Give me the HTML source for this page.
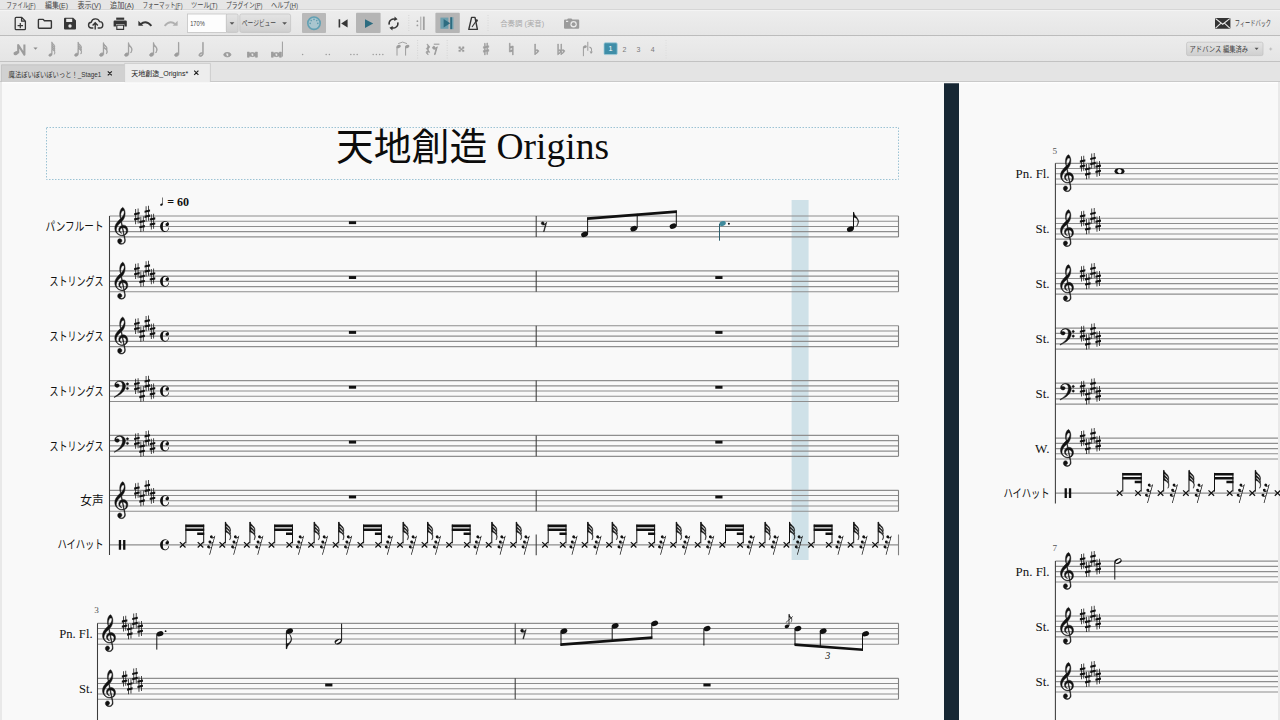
<!DOCTYPE html>
<html lang="ja"><head><meta charset="utf-8"><title>MuseScore</title>
<style>
html,body{margin:0;padding:0;}
body{width:1280px;height:720px;overflow:hidden;position:relative;background:#e7e7e7;font-family:"Liberation Sans","Noto Sans CJK JP",sans-serif;}
#menubar{position:absolute;left:0;top:0;width:1280px;height:10.4px;background:#e6e6e6;border-bottom:1px solid #d6d6d6;box-sizing:border-box;}
#tb1{position:absolute;left:0;top:10.4px;width:1280px;height:25.5px;background:linear-gradient(#ededed,#e6e6e6);border-top:1px solid #f4f4f4;border-bottom:1px solid #bcbcbc;box-sizing:border-box;}
#tb2{position:absolute;left:0;top:35.9px;width:1280px;height:26.1px;background:linear-gradient(#ececec,#e5e5e5);border-bottom:1px solid #c2c2c2;box-sizing:border-box;}
#tabs{position:absolute;left:0;top:62px;width:1280px;height:20px;background:#e4e4e4;border-bottom:1px solid #c9c9c9;box-sizing:border-box;}
#canvas{position:absolute;left:0;top:82px;width:1280px;height:638px;background:#e9e9e9;}
#pageL{position:absolute;left:2px;top:0;width:941.7px;height:638px;background:#f9f9f9;}
#gap{position:absolute;left:943.7px;top:1px;width:15px;height:637px;background:#172734;}
#pageR{position:absolute;left:958.7px;top:0;width:319.5px;height:638px;background:#f9f9f9;}
#topglow{position:absolute;left:2px;top:0;width:1276px;height:2.4px;background:linear-gradient(#ffffff,rgba(255,255,255,0));}
#title{position:absolute;left:46px;top:127px;width:853px;height:53px;margin:0;text-align:center;font-family:"Liberation Serif","Noto Sans CJK JP",serif;font-size:37.2px;line-height:41px;font-weight:normal;color:#0c0c0c;white-space:nowrap;letter-spacing:0;}
#title .kj{font-size:37.8px;}#title .lt{font-size:37.5px;position:relative;top:-1px;}
#score,#ui{position:absolute;left:0;top:0;}
#ui text{font-family:"Liberation Sans","Noto Sans CJK JP",sans-serif;}
</style></head>
<body>
<div id="menubar"></div><div id="tb1"></div><div id="tb2"></div><div id="tabs"></div>
<div id="canvas"><div id="pageL"></div><div id="gap"></div><div id="pageR"></div><div id="topglow"></div></div>
<h1 id="title"><span class="kj">天地創造</span> <span class="lt">Origins</span></h1>
<svg id="score" width="1280" height="720" viewBox="0 0 1280 720">
<defs><path id="gc" d="M314 -801Q300 -854 291 -906Q282 -958 282 -1012Q282 -1059 288.5 -1100.5Q295 -1142 307 -1177Q320 -1217 341 -1252.5Q362 -1288 385.5 -1311Q409 -1334 427 -1334Q451 -1334 493 -1249Q514 -1206 524 -1156Q534 -1106 534 -1049Q534 -978 515 -907.5Q496 -837 459.5 -775Q423 -713 372 -666L407 -498Q422 -500 432 -501Q442 -502 447 -502Q508 -502 556 -467.5Q604 -433 632.5 -377Q661 -321 661 -254Q661 -177 621.5 -115.5Q582 -54 503 -25Q508 -8 532 117Q538 147 541 164.5Q544 182 545 195Q546 208 546 225Q546 275 521.5 314.5Q497 354 455.5 376Q414 398 363 398Q311 398 271 378.5Q231 359 208 324.5Q185 290 185 245Q185 197 211.5 165Q238 133 287 133Q329 133 355.5 163.5Q382 194 382 236Q382 272 357 299Q332 326 292 326H282Q308 365 364 365Q433 365 472 320Q511 275 511 205Q511 188 507 159.5Q503 131 493 91Q483 51 477.5 25Q472 -1 470 -12Q436 -2 390 -2Q304 -2 222 -52Q142 -102 96 -184Q50 -266 50 -361Q50 -451 91 -530Q132 -609 192.5 -675Q253 -741 314 -801ZM341 -826Q364 -838 390 -870.5Q416 -903 440 -945Q464 -987 479 -1029.5Q494 -1072 494 -1106Q494 -1142 483 -1163Q472 -1184 445 -1184Q421 -1184 398.5 -1162Q376 -1140 358.5 -1103.5Q341 -1067 331 -1022Q321 -977 321 -930Q321 -898 327.5 -872Q334 -846 341 -826ZM398 -379Q371 -373 347 -353.5Q323 -334 308.5 -306.5Q294 -279 294 -248Q294 -223 307 -196.5Q320 -170 339 -154Q352 -142 365 -136Q380 -129 380 -123Q380 -120 370 -117Q332 -126 301.5 -151Q271 -176 253.5 -211.5Q236 -247 236 -287Q236 -330 253.5 -370Q271 -410 302.5 -442Q334 -474 374 -490L345 -641Q229 -547 174.5 -456.5Q120 -366 120 -277Q120 -212 154 -156Q188 -100 247 -65.5Q306 -31 380 -31Q400 -31 420.5 -35Q441 -39 464 -45ZM495 -55Q593 -97 593 -227Q593 -270 571 -305.5Q549 -341 512 -362Q475 -383 429 -383Z" stroke="#111" stroke-width="22"/><path id="fc" d="M50 -123Q216 -231 288 -301Q336 -348 373 -408.5Q410 -469 431.5 -536Q453 -603 453 -669Q453 -728 435 -773.5Q417 -819 383 -845Q349 -871 302 -871Q284 -871 264.5 -867Q245 -863 224 -855Q181 -839 158 -813.5Q135 -788 135 -765Q135 -756 143 -752Q151 -748 158 -748Q168 -748 183 -752Q190 -754 196.5 -755Q203 -756 210 -756Q248 -756 272 -733.5Q296 -711 296 -674Q296 -638 266 -612Q236 -586 195 -586Q146 -586 111 -617Q76 -648 76 -697Q76 -756 109 -802Q142 -848 198.5 -874Q255 -900 324 -900Q400 -900 460 -867Q520 -834 555.5 -776.5Q591 -719 591 -646Q591 -551 538 -464Q511 -419 476.5 -379Q442 -339 389 -297.5Q336 -256 256 -208Q176 -160 57 -101ZM687 -809Q710 -809 726 -793Q742 -777 742 -754Q742 -731 726 -715.5Q710 -700 687 -700Q664 -700 648 -715.5Q632 -731 632 -754Q632 -777 648 -793Q664 -809 687 -809ZM687 -589Q710 -589 726 -573Q742 -557 742 -534Q742 -511 726 -495.5Q710 -480 687 -480Q664 -480 648 -495.5Q632 -511 632 -534Q632 -557 648 -573Q664 -589 687 -589Z" stroke="#111" stroke-width="22"/><path id="sh" d="M97 -46V-189L50 -177V-277L97 -290V-486H128V-298L195 -314V-509H226V-322L275 -333V-234L226 -220V-77L275 -89V14L226 26V214H195V34L128 52V247H97V59L50 71V-32ZM195 -70V-214L128 -197V-54Z"/><path id="ct" d="M282 -754Q329 -754 371.5 -734.5Q414 -715 441 -681.5Q468 -648 468 -606Q468 -569 443 -542.5Q418 -516 380 -516Q346 -516 324 -535.5Q302 -555 302 -589Q302 -615 317 -633Q332 -651 353 -661Q364 -666 380 -669.5Q396 -673 396 -679Q396 -695 368 -709Q340 -723 308 -723Q267 -723 238 -704Q209 -685 194.5 -639Q180 -593 180 -511V-433Q180 -396 191.5 -360.5Q203 -325 230 -302Q257 -279 301 -279Q351 -279 392 -324Q433 -369 445 -445H472Q468 -387 442 -341.5Q416 -296 372 -270Q328 -244 271 -244Q208 -244 158 -280.5Q108 -317 79 -378Q50 -439 50 -514Q50 -562 68.5 -605Q87 -648 119 -681.5Q151 -715 193 -734.5Q235 -754 282 -754Z"/><path id="r8" d="M155 -269 251 -609Q230 -590 203.5 -582Q177 -574 151 -574Q108 -574 79 -597Q50 -620 50 -663Q50 -691 70 -710.5Q90 -730 121 -730Q150 -730 168.5 -711.5Q187 -693 187 -662Q187 -640 177 -623Q177 -617 189 -617Q244 -617 294 -703H312L191 -269Z" stroke="#111" stroke-width="22"/><path id="r32" d="M155 4 251 -336Q230 -317 203.5 -309Q177 -301 151 -301Q108 -301 79 -324Q50 -347 50 -390Q50 -417 70 -437Q90 -457 121 -457Q150 -457 168.5 -438.5Q187 -420 187 -389Q187 -367 177 -350Q177 -344 189 -344Q230 -344 267 -390L319 -580Q298 -561 271.5 -553Q245 -545 219 -545Q176 -545 147 -568Q118 -591 118 -634Q118 -663 138 -682Q158 -701 189 -701Q219 -701 237 -682Q255 -663 255 -633Q255 -623 252 -612.5Q249 -602 245 -594Q245 -588 257 -588Q298 -588 334 -633L390 -834Q369 -815 342.5 -807Q316 -799 290 -799Q247 -799 218 -822Q189 -845 189 -888Q189 -917 209 -936Q229 -955 260 -955Q290 -955 308 -936Q326 -917 326 -887Q326 -877 323 -866.5Q320 -856 316 -848Q316 -842 328 -842Q382 -842 433 -928H451L191 4Z"/><path id="f8" d="M0 -1009H26Q33 -968 41.5 -936.5Q50 -905 66.5 -875.5Q83 -846 112 -812L152 -765Q178 -736 202 -704Q274 -611 274 -511Q274 -407 186 -259H170Q199 -318 221 -377.5Q243 -437 243 -491Q243 -518 235 -546.5Q227 -575 212 -605Q181 -666 125 -704.5Q69 -743 0 -743Z" stroke="#111" stroke-width="22"/><path id="f32" d="M0 -1154H26Q29 -1117 42.5 -1089Q56 -1061 84.5 -1031Q113 -1001 160 -956Q207 -912 231.5 -872Q256 -832 265 -794Q274 -756 274 -716Q274 -694 271.5 -672Q269 -650 262 -628Q269 -609 271.5 -589Q274 -569 274 -548Q274 -512 264 -472Q288 -441 288 -374Q288 -328 275.5 -279.5Q263 -231 237 -193H221Q266 -286 266 -355Q266 -372 263.5 -388Q261 -404 255 -418Q235 -468 194 -506.5Q153 -545 103 -574Q66 -596 44.5 -605.5Q23 -615 0 -624ZM30 -972Q30 -935 47 -903Q59 -881 82.5 -857Q106 -833 135 -806Q167 -778 197 -743Q227 -708 247 -665Q250 -683 250 -699Q250 -762 217 -813Q199 -841 176 -863.5Q153 -886 126 -906Q104 -923 79.5 -940Q55 -957 30 -972ZM28 -798Q31 -750 55 -712.5Q79 -675 115 -641L191 -570Q212 -551 226 -534Q240 -517 247 -503Q248 -506 248 -527Q248 -678 28 -798Z" stroke="#111" stroke-width="22"/><g id="xh"><path d="M-2.8 -2.7L2.8 2.7M-2.8 2.7L2.8 -2.7" stroke="#111" stroke-width="1.25" fill="none"/></g><g id="x32"><use href="#xh"/><path d="M3.1 -1.5V-22.8" stroke="#111" stroke-width="1"/><use href="#f32" transform="translate(3.1,-1.34) scale(0.0186,0.0186)"/></g><g id="z32"><use href="#r32" transform="translate(-5.07,9.62) scale(0.02023)"/></g></defs>
<rect x="791.6" y="200" width="17" height="360" fill="#cfe1e8"/>
<rect x="46.5" y="127.5" width="852" height="52" fill="none" stroke="#9cc3d4" stroke-width="1" stroke-dasharray="1.5 1.5"/>
<path d="M109.5 216.00H898.5M109.5 221.23H898.5M109.5 226.46H898.5M109.5 231.69H898.5M109.5 236.92H898.5M109.5 270.86H898.5M109.5 276.09H898.5M109.5 281.32H898.5M109.5 286.55H898.5M109.5 291.78H898.5M109.5 325.72H898.5M109.5 330.95H898.5M109.5 336.18H898.5M109.5 341.41H898.5M109.5 346.64H898.5M109.5 380.58H898.5M109.5 385.81H898.5M109.5 391.04H898.5M109.5 396.27H898.5M109.5 401.50H898.5M109.5 435.44H898.5M109.5 440.67H898.5M109.5 445.90H898.5M109.5 451.13H898.5M109.5 456.36H898.5M109.5 490.30H898.5M109.5 495.53H898.5M109.5 500.76H898.5M109.5 505.99H898.5M109.5 511.22H898.5M109.5 544.8H898.5M97.5 623.30H898.5M97.5 628.53H898.5M97.5 633.76H898.5M97.5 638.99H898.5M97.5 644.22H898.5M97.5 678.30H898.5M97.5 683.53H898.5M97.5 688.76H898.5M97.5 693.99H898.5M97.5 699.22H898.5M1055.4 163.30H1278.0M1055.4 168.53H1278.0M1055.4 173.76H1278.0M1055.4 178.99H1278.0M1055.4 184.22H1278.0M1055.4 218.26H1278.0M1055.4 223.49H1278.0M1055.4 228.72H1278.0M1055.4 233.95H1278.0M1055.4 239.18H1278.0M1055.4 273.22H1278.0M1055.4 278.45H1278.0M1055.4 283.68H1278.0M1055.4 288.91H1278.0M1055.4 294.14H1278.0M1055.4 328.18H1278.0M1055.4 333.41H1278.0M1055.4 338.64H1278.0M1055.4 343.87H1278.0M1055.4 349.10H1278.0M1055.4 383.14H1278.0M1055.4 388.37H1278.0M1055.4 393.60H1278.0M1055.4 398.83H1278.0M1055.4 404.06H1278.0M1055.4 438.10H1278.0M1055.4 443.33H1278.0M1055.4 448.56H1278.0M1055.4 453.79H1278.0M1055.4 459.02H1278.0M1055.4 493.1H1278M1055.4 561.10H1278.0M1055.4 566.33H1278.0M1055.4 571.56H1278.0M1055.4 576.79H1278.0M1055.4 582.02H1278.0M1055.4 616.00H1278.0M1055.4 621.23H1278.0M1055.4 626.46H1278.0M1055.4 631.69H1278.0M1055.4 636.92H1278.0M1055.4 671.10H1278.0M1055.4 676.33H1278.0M1055.4 681.56H1278.0M1055.4 686.79H1278.0M1055.4 692.02H1278.0" stroke="#8e8e8e" stroke-width="1.15" fill="none"/>
<path d="M109.50 216.00V555.10M536.20 216.00V236.92M536.20 270.86V291.78M536.20 325.72V346.64M536.20 380.58V401.50M536.20 435.44V456.36M536.20 490.30V511.22M536.20 534.40V555.20M97.50 623.30V721.00M515.20 623.30V644.22M515.20 678.30V699.22M1055.40 163.30V503.40M1055.40 561.10V721.00" stroke="#3c3c3c" stroke-width="1.05" fill="none"/>
<path d="M898.50 216.00V236.92M898.50 270.86V291.78M898.50 325.72V346.64M898.50 380.58V401.50M898.50 435.44V456.36M898.50 490.30V511.22M898.50 534.40V555.20M898.50 623.30V644.22M898.50 678.30V699.22" stroke="#808080" stroke-width="1.1" fill="none"/>
<g fill="#111"><use href="#gc" transform="translate(113.73,235.82) scale(0.02130,0.02130)"/><use href="#sh" transform="translate(132.92,219.02) scale(0.02450,0.02080)"/><use href="#sh" transform="translate(138.12,226.87) scale(0.02450,0.02080)"/><use href="#sh" transform="translate(143.32,216.41) scale(0.02450,0.02080)"/><use href="#sh" transform="translate(148.52,224.25) scale(0.02450,0.02080)"/><use href="#ct" transform="translate(159.01,237.14) scale(0.02140,0.02140)"/><use href="#gc" transform="translate(113.73,290.68) scale(0.02130,0.02130)"/><use href="#sh" transform="translate(132.92,273.88) scale(0.02450,0.02080)"/><use href="#sh" transform="translate(138.12,281.73) scale(0.02450,0.02080)"/><use href="#sh" transform="translate(143.32,271.27) scale(0.02450,0.02080)"/><use href="#sh" transform="translate(148.52,279.11) scale(0.02450,0.02080)"/><use href="#ct" transform="translate(159.01,292.00) scale(0.02140,0.02140)"/><use href="#gc" transform="translate(113.73,345.54) scale(0.02130,0.02130)"/><use href="#sh" transform="translate(132.92,328.74) scale(0.02450,0.02080)"/><use href="#sh" transform="translate(138.12,336.59) scale(0.02450,0.02080)"/><use href="#sh" transform="translate(143.32,326.13) scale(0.02450,0.02080)"/><use href="#sh" transform="translate(148.52,333.97) scale(0.02450,0.02080)"/><use href="#ct" transform="translate(159.01,346.86) scale(0.02140,0.02140)"/><use href="#fc" transform="translate(113.16,399.58) scale(0.02078,0.02078)"/><use href="#sh" transform="translate(132.92,388.83) scale(0.02450,0.02080)"/><use href="#sh" transform="translate(138.12,396.68) scale(0.02450,0.02080)"/><use href="#sh" transform="translate(143.32,386.22) scale(0.02450,0.02080)"/><use href="#sh" transform="translate(148.52,394.06) scale(0.02450,0.02080)"/><use href="#ct" transform="translate(159.01,401.72) scale(0.02140,0.02140)"/><use href="#fc" transform="translate(113.16,454.44) scale(0.02078,0.02078)"/><use href="#sh" transform="translate(132.92,443.69) scale(0.02450,0.02080)"/><use href="#sh" transform="translate(138.12,451.54) scale(0.02450,0.02080)"/><use href="#sh" transform="translate(143.32,441.08) scale(0.02450,0.02080)"/><use href="#sh" transform="translate(148.52,448.92) scale(0.02450,0.02080)"/><use href="#ct" transform="translate(159.01,456.58) scale(0.02140,0.02140)"/><use href="#gc" transform="translate(113.73,510.12) scale(0.02130,0.02130)"/><use href="#sh" transform="translate(132.92,493.32) scale(0.02450,0.02080)"/><use href="#sh" transform="translate(138.12,501.17) scale(0.02450,0.02080)"/><use href="#sh" transform="translate(143.32,490.71) scale(0.02450,0.02080)"/><use href="#sh" transform="translate(148.52,498.55) scale(0.02450,0.02080)"/><use href="#ct" transform="translate(159.01,511.44) scale(0.02140,0.02140)"/><path d="M118.80 539.90h2.3v9.8h-2.3zM123.10 539.90h2.3v9.8h-2.3z" fill="#111"/><use href="#ct" transform="translate(159.01,555.48) scale(0.02140,0.02140)"/><rect x="348.90" y="276.09" width="7.2" height="2.9" fill="#111"/><rect x="715.30" y="276.09" width="7.2" height="2.9" fill="#111"/><rect x="348.90" y="330.95" width="7.2" height="2.9" fill="#111"/><rect x="715.30" y="330.95" width="7.2" height="2.9" fill="#111"/><rect x="348.90" y="385.81" width="7.2" height="2.9" fill="#111"/><rect x="715.30" y="385.81" width="7.2" height="2.9" fill="#111"/><rect x="348.90" y="440.67" width="7.2" height="2.9" fill="#111"/><rect x="715.30" y="440.67" width="7.2" height="2.9" fill="#111"/><rect x="348.90" y="495.53" width="7.2" height="2.9" fill="#111"/><rect x="715.30" y="495.53" width="7.2" height="2.9" fill="#111"/><rect x="348.90" y="221.23" width="7.2" height="2.9" fill="#111"/><path transform="translate(159.42,206.01) scale(0.01530)" d="M194 -563H231V-148Q231 -88 195.5 -51Q160 -14 107 -14Q79 -14 65 -27.5Q51 -41 51 -63Q51 -89 65 -110Q79 -131 102 -144Q125 -157 150 -157Q172 -157 194 -148Z" fill="#111"/><text x="167.2" y="206" font-family="&quot;Liberation Serif&quot;,&quot;Noto Serif CJK SC&quot;,serif" font-size="12" text-anchor="start" font-weight="bold" font-style="normal" fill="#111">= 60</text><use href="#r8" transform="translate(540.14,237.27) scale(0.02126,0.02126)"/><path d="M587.60 234.00V217.60" stroke="#111" stroke-width="1"/><path d="M637.20 228.20V213.80" stroke="#111" stroke-width="1"/><path d="M676.30 225.80V210.60" stroke="#111" stroke-width="1"/><path d="M587.10 217.30L676.80 210.30V213.00L587.10 220.00Z" fill="#111"/><ellipse cx="584.60" cy="234.40" rx="3.55" ry="2.55" transform="rotate(-22 584.60 234.40)" fill="#111"/><ellipse cx="633.80" cy="228.70" rx="3.55" ry="2.55" transform="rotate(-22 633.80 228.70)" fill="#111"/><ellipse cx="673.10" cy="226.20" rx="3.55" ry="2.55" transform="rotate(-22 673.10 226.20)" fill="#111"/><ellipse cx="722.60" cy="223.60" rx="3.3" ry="2.4" transform="rotate(-22 722.60 223.60)" fill="#3f8a9c"/><path d="M719.50 224.00V240.70" stroke="#2b5f6e" stroke-width="1"/><circle cx="728.90" cy="223.80" r="1.0" fill="#111"/><ellipse cx="850.40" cy="229.20" rx="3.55" ry="2.55" transform="rotate(-22 850.40 229.20)" fill="#111"/><path d="M853.50 228.50V212.30" stroke="#111" stroke-width="1"/><use href="#f8" transform="translate(853.50,230.97) scale(0.01850,0.01850)"/><use href="#xh" x="182.70" y="544.80"/><use href="#xh" x="200.50" y="544.80"/><path d="M185.90 543.30V524.60M203.70 543.30V524.60" stroke="#111" stroke-width="1"/><path d="M185.40 524.60H204.20v2.6H185.40zM185.40 528.60H204.20v2.5H185.40zM197.20 532.40H204.20v2.5H197.20z" fill="#111"/><use href="#z32" x="211.20" y="545.00"/><use href="#x32" x="222.30" y="544.80"/><use href="#z32" x="235.20" y="545.00"/><use href="#x32" x="246.80" y="544.80"/><use href="#z32" x="259.30" y="545.00"/><use href="#xh" x="271.50" y="544.80"/><use href="#xh" x="289.30" y="544.80"/><path d="M274.70 543.30V524.60M292.50 543.30V524.60" stroke="#111" stroke-width="1"/><path d="M274.20 524.60H293.00v2.6H274.20zM274.20 528.60H293.00v2.5H274.20zM286.00 532.40H293.00v2.5H286.00z" fill="#111"/><use href="#z32" x="300.00" y="545.00"/><use href="#x32" x="311.10" y="544.80"/><use href="#z32" x="324.00" y="545.00"/><use href="#x32" x="335.60" y="544.80"/><use href="#z32" x="348.10" y="545.00"/><use href="#xh" x="360.40" y="544.80"/><use href="#xh" x="378.20" y="544.80"/><path d="M363.60 543.30V524.60M381.40 543.30V524.60" stroke="#111" stroke-width="1"/><path d="M363.10 524.60H381.90v2.6H363.10zM363.10 528.60H381.90v2.5H363.10zM374.90 532.40H381.90v2.5H374.90z" fill="#111"/><use href="#z32" x="388.90" y="545.00"/><use href="#x32" x="400.00" y="544.80"/><use href="#z32" x="412.90" y="545.00"/><use href="#x32" x="424.50" y="544.80"/><use href="#z32" x="437.00" y="545.00"/><use href="#xh" x="449.10" y="544.80"/><use href="#xh" x="466.90" y="544.80"/><path d="M452.30 543.30V524.60M470.10 543.30V524.60" stroke="#111" stroke-width="1"/><path d="M451.80 524.60H470.60v2.6H451.80zM451.80 528.60H470.60v2.5H451.80zM463.60 532.40H470.60v2.5H463.60z" fill="#111"/><use href="#z32" x="477.60" y="545.00"/><use href="#x32" x="488.70" y="544.80"/><use href="#z32" x="501.60" y="545.00"/><use href="#x32" x="513.20" y="544.80"/><use href="#z32" x="525.70" y="545.00"/><use href="#xh" x="545.00" y="544.80"/><use href="#xh" x="562.80" y="544.80"/><path d="M548.20 543.30V524.60M566.00 543.30V524.60" stroke="#111" stroke-width="1"/><path d="M547.70 524.60H566.50v2.6H547.70zM547.70 528.60H566.50v2.5H547.70zM559.50 532.40H566.50v2.5H559.50z" fill="#111"/><use href="#z32" x="573.50" y="545.00"/><use href="#x32" x="584.60" y="544.80"/><use href="#z32" x="597.50" y="545.00"/><use href="#x32" x="609.10" y="544.80"/><use href="#z32" x="621.60" y="545.00"/><use href="#xh" x="633.60" y="544.80"/><use href="#xh" x="651.40" y="544.80"/><path d="M636.80 543.30V524.60M654.60 543.30V524.60" stroke="#111" stroke-width="1"/><path d="M636.30 524.60H655.10v2.6H636.30zM636.30 528.60H655.10v2.5H636.30zM648.10 532.40H655.10v2.5H648.10z" fill="#111"/><use href="#z32" x="662.10" y="545.00"/><use href="#x32" x="673.20" y="544.80"/><use href="#z32" x="686.10" y="545.00"/><use href="#x32" x="697.70" y="544.80"/><use href="#z32" x="710.20" y="545.00"/><use href="#xh" x="722.30" y="544.80"/><use href="#xh" x="740.10" y="544.80"/><path d="M725.50 543.30V524.60M743.30 543.30V524.60" stroke="#111" stroke-width="1"/><path d="M725.00 524.60H743.80v2.6H725.00zM725.00 528.60H743.80v2.5H725.00zM736.80 532.40H743.80v2.5H736.80z" fill="#111"/><use href="#z32" x="750.80" y="545.00"/><use href="#x32" x="761.90" y="544.80"/><use href="#z32" x="774.80" y="545.00"/><use href="#x32" x="786.40" y="544.80"/><use href="#z32" x="798.90" y="545.00"/><use href="#xh" x="811.00" y="544.80"/><use href="#xh" x="828.80" y="544.80"/><path d="M814.20 543.30V524.60M832.00 543.30V524.60" stroke="#111" stroke-width="1"/><path d="M813.70 524.60H832.50v2.6H813.70zM813.70 528.60H832.50v2.5H813.70zM825.50 532.40H832.50v2.5H825.50z" fill="#111"/><use href="#z32" x="839.50" y="545.00"/><use href="#x32" x="850.60" y="544.80"/><use href="#z32" x="863.50" y="545.00"/><use href="#x32" x="875.10" y="544.80"/><use href="#z32" x="887.60" y="545.00"/><use href="#gc" transform="translate(101.43,643.12) scale(0.02130,0.02130)"/><use href="#sh" transform="translate(120.62,626.32) scale(0.02450,0.02080)"/><use href="#sh" transform="translate(125.82,634.17) scale(0.02450,0.02080)"/><use href="#sh" transform="translate(131.02,623.71) scale(0.02450,0.02080)"/><use href="#sh" transform="translate(136.22,631.55) scale(0.02450,0.02080)"/><use href="#gc" transform="translate(101.43,698.12) scale(0.02130,0.02130)"/><use href="#sh" transform="translate(120.62,681.32) scale(0.02450,0.02080)"/><use href="#sh" transform="translate(125.82,689.17) scale(0.02450,0.02080)"/><use href="#sh" transform="translate(131.02,678.71) scale(0.02450,0.02080)"/><use href="#sh" transform="translate(136.22,686.55) scale(0.02450,0.02080)"/><ellipse cx="160.00" cy="633.76" rx="3.55" ry="2.55" transform="rotate(-22 160.00 633.76)" fill="#111"/><path d="M156.80 634.26V649.60" stroke="#111" stroke-width="1"/><circle cx="165.60" cy="631.14" r="0.9" fill="#111"/><ellipse cx="289.60" cy="631.14" rx="3.55" ry="2.55" transform="rotate(-22 289.60 631.14)" fill="#111"/><path d="M286.40 631.64V648.80" stroke="#111" stroke-width="1"/><use href="#f8" transform="translate(286.40,629.43) scale(0.01920,-0.01920)"/><ellipse cx="338.20" cy="641.60" rx="3.7" ry="2.5" transform="rotate(-22 338.20 641.60)" fill="#111"/><ellipse cx="338.20" cy="641.60" rx="3.0" ry="1.15" transform="rotate(-33 338.20 641.60)" fill="#f9f9f9"/><path d="M341.60 641.10V623.60" stroke="#111" stroke-width="1"/><rect x="325.20" y="683.53" width="7.2" height="2.9" fill="#111"/><rect x="703.40" y="683.53" width="7.2" height="2.9" fill="#111"/><use href="#r8" transform="translate(519.54,644.57) scale(0.02126,0.02126)"/><path d="M561.00 631.80V645.80" stroke="#111" stroke-width="1"/><path d="M612.20 626.60V641.60" stroke="#111" stroke-width="1"/><path d="M651.80 623.70V638.80" stroke="#111" stroke-width="1"/><path d="M560.50 643.20L652.30 636.20V638.90L560.50 645.90Z" fill="#111"/><ellipse cx="563.90" cy="631.14" rx="3.55" ry="2.55" transform="rotate(-22 563.90 631.14)" fill="#111"/><ellipse cx="615.20" cy="625.91" rx="3.55" ry="2.55" transform="rotate(-22 615.20 625.91)" fill="#111"/><ellipse cx="654.70" cy="623.30" rx="3.55" ry="2.55" transform="rotate(-22 654.70 623.30)" fill="#111"/><ellipse cx="707.10" cy="628.53" rx="3.55" ry="2.55" transform="rotate(-22 707.10 628.53)" fill="#111"/><path d="M703.90 629.03V645.50" stroke="#111" stroke-width="1"/><ellipse cx="786.90" cy="626.30" rx="2.3" ry="1.7" transform="rotate(-22 786.90 626.30)" fill="#111"/><path d="M789.00 626.00V614.20" stroke="#111" stroke-width="0.8"/><use href="#f8" transform="translate(789.00,625.30) scale(0.01100,0.01100)"/><path d="M785.8 622.6L792.8 616.4" stroke="#111" stroke-width="0.7"/><path d="M795.00 629.20V645.00" stroke="#111" stroke-width="1"/><path d="M820.30 631.40V647.00" stroke="#111" stroke-width="1"/><path d="M862.50 634.20V650.20" stroke="#111" stroke-width="1"/><path d="M794.50 643.20L863.00 648.40V651.10L794.50 645.90Z" fill="#111"/><ellipse cx="797.90" cy="628.53" rx="3.55" ry="2.55" transform="rotate(-22 797.90 628.53)" fill="#111"/><ellipse cx="823.20" cy="631.14" rx="3.55" ry="2.55" transform="rotate(-22 823.20 631.14)" fill="#111"/><ellipse cx="865.60" cy="633.76" rx="3.55" ry="2.55" transform="rotate(-22 865.60 633.76)" fill="#111"/><use href="#gc" transform="translate(1059.43,183.12) scale(0.02130,0.02130)"/><use href="#sh" transform="translate(1078.62,166.32) scale(0.02450,0.02080)"/><use href="#sh" transform="translate(1083.82,174.17) scale(0.02450,0.02080)"/><use href="#sh" transform="translate(1089.02,163.71) scale(0.02450,0.02080)"/><use href="#sh" transform="translate(1094.22,171.55) scale(0.02450,0.02080)"/><use href="#gc" transform="translate(1059.43,238.08) scale(0.02130,0.02130)"/><use href="#sh" transform="translate(1078.62,221.28) scale(0.02450,0.02080)"/><use href="#sh" transform="translate(1083.82,229.13) scale(0.02450,0.02080)"/><use href="#sh" transform="translate(1089.02,218.67) scale(0.02450,0.02080)"/><use href="#sh" transform="translate(1094.22,226.51) scale(0.02450,0.02080)"/><use href="#gc" transform="translate(1059.43,293.04) scale(0.02130,0.02130)"/><use href="#sh" transform="translate(1078.62,276.24) scale(0.02450,0.02080)"/><use href="#sh" transform="translate(1083.82,284.09) scale(0.02450,0.02080)"/><use href="#sh" transform="translate(1089.02,273.63) scale(0.02450,0.02080)"/><use href="#sh" transform="translate(1094.22,281.47) scale(0.02450,0.02080)"/><use href="#fc" transform="translate(1058.96,347.18) scale(0.02078,0.02078)"/><use href="#sh" transform="translate(1078.62,336.43) scale(0.02450,0.02080)"/><use href="#sh" transform="translate(1083.82,344.28) scale(0.02450,0.02080)"/><use href="#sh" transform="translate(1089.02,333.82) scale(0.02450,0.02080)"/><use href="#sh" transform="translate(1094.22,341.66) scale(0.02450,0.02080)"/><use href="#fc" transform="translate(1058.96,402.14) scale(0.02078,0.02078)"/><use href="#sh" transform="translate(1078.62,391.39) scale(0.02450,0.02080)"/><use href="#sh" transform="translate(1083.82,399.24) scale(0.02450,0.02080)"/><use href="#sh" transform="translate(1089.02,388.78) scale(0.02450,0.02080)"/><use href="#sh" transform="translate(1094.22,396.62) scale(0.02450,0.02080)"/><use href="#gc" transform="translate(1059.43,457.92) scale(0.02130,0.02130)"/><use href="#sh" transform="translate(1078.62,441.12) scale(0.02450,0.02080)"/><use href="#sh" transform="translate(1083.82,448.97) scale(0.02450,0.02080)"/><use href="#sh" transform="translate(1089.02,438.51) scale(0.02450,0.02080)"/><use href="#sh" transform="translate(1094.22,446.35) scale(0.02450,0.02080)"/><path d="M1064.60 488.20h2.3v9.8h-2.3zM1068.90 488.20h2.3v9.8h-2.3z" fill="#111"/><ellipse cx="1119.5" cy="171.15" rx="5.0" ry="2.9" fill="#111"/><ellipse cx="1119.5" cy="171.15" rx="2.2" ry="2.0" transform="rotate(35 1119.5 171.15)" fill="#f9f9f9"/><use href="#xh" x="1119.60" y="493.10"/><use href="#xh" x="1138.01" y="493.10"/><path d="M1122.80 491.60V472.90M1141.21 491.60V472.90" stroke="#111" stroke-width="1"/><path d="M1122.30 472.90H1141.71v2.6H1122.30zM1122.30 476.90H1141.71v2.5H1122.30zM1134.71 480.70H1141.71v2.5H1134.71z" fill="#111"/><use href="#z32" x="1149.07" y="493.30"/><use href="#x32" x="1160.55" y="493.10"/><use href="#z32" x="1173.88" y="493.30"/><use href="#x32" x="1185.88" y="493.10"/><use href="#z32" x="1198.80" y="493.30"/><use href="#xh" x="1211.30" y="493.10"/><use href="#xh" x="1229.71" y="493.10"/><path d="M1214.50 491.60V472.90M1232.91 491.60V472.90" stroke="#111" stroke-width="1"/><path d="M1214.00 472.90H1233.41v2.6H1214.00zM1214.00 476.90H1233.41v2.5H1214.00zM1226.41 480.70H1233.41v2.5H1226.41z" fill="#111"/><use href="#z32" x="1240.77" y="493.30"/><use href="#x32" x="1252.25" y="493.10"/><use href="#z32" x="1265.59" y="493.30"/><use href="#x32" x="1277.58" y="493.10"/><use href="#z32" x="1290.50" y="493.30"/><use href="#gc" transform="translate(1059.43,580.92) scale(0.02130,0.02130)"/><use href="#sh" transform="translate(1078.62,564.12) scale(0.02450,0.02080)"/><use href="#sh" transform="translate(1083.82,571.97) scale(0.02450,0.02080)"/><use href="#sh" transform="translate(1089.02,561.51) scale(0.02450,0.02080)"/><use href="#sh" transform="translate(1094.22,569.35) scale(0.02450,0.02080)"/><use href="#gc" transform="translate(1059.43,635.82) scale(0.02130,0.02130)"/><use href="#sh" transform="translate(1078.62,619.02) scale(0.02450,0.02080)"/><use href="#sh" transform="translate(1083.82,626.87) scale(0.02450,0.02080)"/><use href="#sh" transform="translate(1089.02,616.41) scale(0.02450,0.02080)"/><use href="#sh" transform="translate(1094.22,624.25) scale(0.02450,0.02080)"/><use href="#gc" transform="translate(1059.43,690.92) scale(0.02130,0.02130)"/><use href="#sh" transform="translate(1078.62,674.12) scale(0.02450,0.02080)"/><use href="#sh" transform="translate(1083.82,681.97) scale(0.02450,0.02080)"/><use href="#sh" transform="translate(1089.02,671.51) scale(0.02450,0.02080)"/><use href="#sh" transform="translate(1094.22,679.35) scale(0.02450,0.02080)"/><ellipse cx="1118.10" cy="561.10" rx="3.7" ry="2.5" transform="rotate(-22 1118.10 561.10)" fill="#111"/><ellipse cx="1118.10" cy="561.10" rx="3.0" ry="1.15" transform="rotate(-33 1118.10 561.10)" fill="#f9f9f9"/><path d="M1114.80 561.60V579.60" stroke="#111" stroke-width="1"/></g>
<text x="103.6" y="231.16" font-family="&quot;Liberation Sans&quot;,&quot;Noto Sans CJK JP&quot;,sans-serif" font-size="12" text-anchor="end" font-weight="normal" font-style="normal" fill="#111" textLength="58.1" lengthAdjust="spacingAndGlyphs">パンフルート</text><text x="103.6" y="286.02" font-family="&quot;Liberation Sans&quot;,&quot;Noto Sans CJK JP&quot;,sans-serif" font-size="12" text-anchor="end" font-weight="normal" font-style="normal" fill="#111" textLength="54.1" lengthAdjust="spacingAndGlyphs">ストリングス</text><text x="103.6" y="340.88" font-family="&quot;Liberation Sans&quot;,&quot;Noto Sans CJK JP&quot;,sans-serif" font-size="12" text-anchor="end" font-weight="normal" font-style="normal" fill="#111" textLength="54.1" lengthAdjust="spacingAndGlyphs">ストリングス</text><text x="103.6" y="395.73999999999995" font-family="&quot;Liberation Sans&quot;,&quot;Noto Sans CJK JP&quot;,sans-serif" font-size="12" text-anchor="end" font-weight="normal" font-style="normal" fill="#111" textLength="54.1" lengthAdjust="spacingAndGlyphs">ストリングス</text><text x="103.6" y="450.59999999999997" font-family="&quot;Liberation Sans&quot;,&quot;Noto Sans CJK JP&quot;,sans-serif" font-size="12" text-anchor="end" font-weight="normal" font-style="normal" fill="#111" textLength="54.1" lengthAdjust="spacingAndGlyphs">ストリングス</text><text x="103.6" y="505.46" font-family="&quot;Liberation Sans&quot;,&quot;Noto Sans CJK JP&quot;,sans-serif" font-size="12" text-anchor="end" font-weight="normal" font-style="normal" fill="#111" textLength="23.4" lengthAdjust="spacingAndGlyphs">女声</text><text x="103.6" y="549.4" font-family="&quot;Liberation Sans&quot;,&quot;Noto Sans CJK JP&quot;,sans-serif" font-size="12" text-anchor="end" font-weight="normal" font-style="normal" fill="#111" textLength="46.2" lengthAdjust="spacingAndGlyphs">ハイハット</text><text x="96.6" y="613.1" font-family="&quot;Liberation Serif&quot;,&quot;Noto Serif CJK SC&quot;,serif" font-size="9.2" text-anchor="middle" font-weight="normal" font-style="normal" fill="#555">3</text><text x="92.6" y="638.2" font-family="&quot;Liberation Serif&quot;,&quot;Noto Serif CJK SC&quot;,serif" font-size="12" text-anchor="end" font-weight="normal" font-style="normal" fill="#111" textLength="33.4" lengthAdjust="spacingAndGlyphs">Pn. Fl.</text><text x="92.6" y="693.2" font-family="&quot;Liberation Serif&quot;,&quot;Noto Serif CJK SC&quot;,serif" font-size="12" text-anchor="end" font-weight="normal" font-style="normal" fill="#111" textLength="13.6" lengthAdjust="spacingAndGlyphs">St.</text><text x="827.8" y="658.6" font-family="&quot;Liberation Serif&quot;,&quot;Noto Serif CJK SC&quot;,serif" font-size="10" text-anchor="middle" font-weight="normal" font-style="italic" fill="#111">3</text><text x="1054.9" y="154.0" font-family="&quot;Liberation Serif&quot;,&quot;Noto Serif CJK SC&quot;,serif" font-size="9.2" text-anchor="middle" font-weight="normal" font-style="normal" fill="#555">5</text><text x="1049.6" y="178.16000000000003" font-family="&quot;Liberation Serif&quot;,&quot;Noto Serif CJK SC&quot;,serif" font-size="12" text-anchor="end" font-weight="normal" font-style="normal" fill="#111" textLength="34" lengthAdjust="spacingAndGlyphs">Pn. Fl.</text><text x="1049.6" y="233.12000000000003" font-family="&quot;Liberation Serif&quot;,&quot;Noto Serif CJK SC&quot;,serif" font-size="12" text-anchor="end" font-weight="normal" font-style="normal" fill="#111" textLength="14" lengthAdjust="spacingAndGlyphs">St.</text><text x="1049.6" y="288.08" font-family="&quot;Liberation Serif&quot;,&quot;Noto Serif CJK SC&quot;,serif" font-size="12" text-anchor="end" font-weight="normal" font-style="normal" fill="#111" textLength="14" lengthAdjust="spacingAndGlyphs">St.</text><text x="1049.6" y="343.03999999999996" font-family="&quot;Liberation Serif&quot;,&quot;Noto Serif CJK SC&quot;,serif" font-size="12" text-anchor="end" font-weight="normal" font-style="normal" fill="#111" textLength="14" lengthAdjust="spacingAndGlyphs">St.</text><text x="1049.6" y="397.99999999999994" font-family="&quot;Liberation Serif&quot;,&quot;Noto Serif CJK SC&quot;,serif" font-size="12" text-anchor="end" font-weight="normal" font-style="normal" fill="#111" textLength="14" lengthAdjust="spacingAndGlyphs">St.</text><text x="1049.6" y="452.96" font-family="&quot;Liberation Serif&quot;,&quot;Noto Serif CJK SC&quot;,serif" font-size="12" text-anchor="end" font-weight="normal" font-style="normal" fill="#111" textLength="14.5" lengthAdjust="spacingAndGlyphs">W.</text><text x="1049.6" y="497.70000000000005" font-family="&quot;Liberation Sans&quot;,&quot;Noto Sans CJK JP&quot;,sans-serif" font-size="12" text-anchor="end" font-weight="normal" font-style="normal" fill="#111" textLength="46.2" lengthAdjust="spacingAndGlyphs">ハイハット</text><text x="1054.9" y="551.3" font-family="&quot;Liberation Serif&quot;,&quot;Noto Serif CJK SC&quot;,serif" font-size="9.2" text-anchor="middle" font-weight="normal" font-style="normal" fill="#555">7</text><text x="1049.6" y="575.96" font-family="&quot;Liberation Serif&quot;,&quot;Noto Serif CJK SC&quot;,serif" font-size="12" text-anchor="end" font-weight="normal" font-style="normal" fill="#111" textLength="34" lengthAdjust="spacingAndGlyphs">Pn. Fl.</text><text x="1049.6" y="630.86" font-family="&quot;Liberation Serif&quot;,&quot;Noto Serif CJK SC&quot;,serif" font-size="12" text-anchor="end" font-weight="normal" font-style="normal" fill="#111" textLength="14" lengthAdjust="spacingAndGlyphs">St.</text><text x="1049.6" y="685.96" font-family="&quot;Liberation Serif&quot;,&quot;Noto Serif CJK SC&quot;,serif" font-size="12" text-anchor="end" font-weight="normal" font-style="normal" fill="#111" textLength="14" lengthAdjust="spacingAndGlyphs">St.</text>
</svg>
<svg id="ui" width="1280" height="83" viewBox="0 0 1280 83">
<defs><linearGradient id="btn" x1="0" y1="0" x2="0" y2="1"><stop offset="0" stop-color="#e4e4e4"/><stop offset="1" stop-color="#cfcfcf"/></linearGradient></defs>
<text x="6.3" y="7.9" font-size="7.5" fill="#444" text-anchor="start" font-weight="normal" textLength="29.3" lengthAdjust="spacingAndGlyphs">ファイル(F)</text><path d="M27.6 9.2h4.2" stroke="#555" stroke-width="0.6"/><text x="45" y="7.9" font-size="7.5" fill="#444" text-anchor="start" font-weight="normal" textLength="23.0" lengthAdjust="spacingAndGlyphs">編集(E)</text><path d="M60.0 9.2h4.2" stroke="#555" stroke-width="0.6"/><text x="77.5" y="7.9" font-size="7.5" fill="#444" text-anchor="start" font-weight="normal" textLength="23.5" lengthAdjust="spacingAndGlyphs">表示(V)</text><path d="M93.0 9.2h4.2" stroke="#555" stroke-width="0.6"/><text x="110" y="7.9" font-size="7.5" fill="#444" text-anchor="start" font-weight="normal" textLength="23.8" lengthAdjust="spacingAndGlyphs">追加(A)</text><path d="M125.8 9.2h4.2" stroke="#555" stroke-width="0.6"/><text x="142.5" y="7.9" font-size="7.5" fill="#444" text-anchor="start" font-weight="normal" textLength="40.0" lengthAdjust="spacingAndGlyphs">フォーマット(F)</text><path d="M174.5 9.2h4.2" stroke="#555" stroke-width="0.6"/><text x="191" y="7.9" font-size="7.5" fill="#444" text-anchor="start" font-weight="normal" textLength="26.5" lengthAdjust="spacingAndGlyphs">ツール(T)</text><path d="M209.5 9.2h4.2" stroke="#555" stroke-width="0.6"/><text x="226" y="7.9" font-size="7.5" fill="#444" text-anchor="start" font-weight="normal" textLength="36.5" lengthAdjust="spacingAndGlyphs">プラグイン(P)</text><path d="M254.5 9.2h4.2" stroke="#555" stroke-width="0.6"/><text x="271" y="7.9" font-size="7.5" fill="#444" text-anchor="start" font-weight="normal" textLength="27.0" lengthAdjust="spacingAndGlyphs">ヘルプ(H)</text><path d="M290.0 9.2h4.2" stroke="#555" stroke-width="0.6"/><path d="M16.2 17.4h5.6l3.6 3.7v7.6q0 1-1 1h-8.2q-1 0-1-1v-10.3q0-1 1-1zM21.6 17.6v3.6h3.6" fill="none" stroke="#363636" stroke-width="1.3" stroke-linejoin="round"/><path d="M17.6 25.6h5.4M20.3 22.9v5.4" stroke="#363636" stroke-width="1.2"/><path d="M39 19.4h4.2l1.2 1.4h6.4q0.6 0 0.6 0.6v6.2q0 0.6-0.6 0.6h-11.8q-0.6 0-0.6-0.6v-7.6q0-0.6 0.6-0.6z" fill="none" stroke="#363636" stroke-width="1.4" stroke-linejoin="round"/><path d="M65 17.8h8.2l2.8 2.8v8q0 1-1 1h-10q-1 0-1-1v-9.8q0-1 1-1z" fill="#363636"/><rect x="66.2" y="18.8" width="6" height="3.2" fill="#e9e9e9"/><circle cx="70" cy="26" r="1.7" fill="#e9e9e9"/><path d="M92.8 28h-1.2a2.9 2.9 0 0 1-0.3-5.8a4.3 4.3 0 0 1 8.2-0.6a3.2 3.2 0 0 1 0.2 6.4h-1.5" fill="none" stroke="#363636" stroke-width="1.4" stroke-linecap="round"/><path d="M95.2 29.6v-6.2M92.6 25.4l2.6-2.6l2.6 2.6" fill="none" stroke="#363636" stroke-width="1.4"/><path d="M116.2 17.6h8v2.2h-8z" fill="#363636"/><path d="M114.6 20.6h11.2q1 0 1 1v5h-2.4v-2.4h-8.4v2.4h-2.4v-5q0-1 1-1z" fill="#363636"/><path d="M116.8 25.2h6.8v4.2h-6.8z" fill="none" stroke="#363636" stroke-width="1.1"/><path d="M138.4 20.8v4.9h5z" fill="#363636"/><path d="M140.6 24.2q5.4-4.6 10.8 1.6" fill="none" stroke="#363636" stroke-width="1.9"/><path d="M177.6 20.8v4.9h-5z" fill="#b0b0b0"/><path d="M175.4 24.2q-5.4-4.6-10.8 1.6" fill="none" stroke="#b0b0b0" stroke-width="1.9"/><rect x="187.5" y="14" width="39" height="18.4" fill="#fdfdfd" stroke="#c4c4c4" stroke-width="0.8"/><text x="190.2" y="25.6" font-size="7.6" fill="#444" text-anchor="start" font-weight="normal" textLength="14.5" lengthAdjust="spacingAndGlyphs">170%</text><rect x="226.3" y="14" width="11.8" height="18.4" rx="1.5" fill="url(#btn)" stroke="#c2c2c2" stroke-width="0.7"/><path d="M229.6 22.2h4.8l-2.4 2.6z" fill="#555"/><rect x="239.8" y="14" width="50.8" height="18.4" rx="1.8" fill="url(#btn)" stroke="#c2c2c2" stroke-width="0.7"/><text x="241.8" y="25.8" font-size="7.6" fill="#444" text-anchor="start" font-weight="normal" textLength="34.3" lengthAdjust="spacingAndGlyphs">ページビュー</text><path d="M282.2 22.2h4.8l-2.4 2.6z" fill="#555"/><rect x="302" y="13" width="24" height="20" rx="1" fill="#b9b9b9"/><circle cx="314" cy="23.2" r="6.2" fill="#a9c6cf" stroke="#62a0b3" stroke-width="1.6"/><g fill="#5f9bae"><circle cx="310.2" cy="23.4" r="0.8"/><circle cx="311.2" cy="20.6" r="0.8"/><circle cx="314" cy="19.4" r="0.8"/><circle cx="316.8" cy="20.6" r="0.8"/><circle cx="317.8" cy="23.4" r="0.8"/></g><path d="M338.6 19.3h1.6v8.2h-1.6zM347.6 19.3v8.2l-6.4-4.1z" fill="#363636"/><rect x="356" y="12.8" width="24.6" height="20.2" rx="1" fill="#b5b5b5"/><path d="M365 19.2l8.2 4.4l-8.2 4.4z" fill="#2d6c80"/><path d="M389.2 24.6a4.6 4.6 0 0 1 6.4-5.2M397.8 22.4a4.6 4.6 0 0 1-6.4 5.2" fill="none" stroke="#363636" stroke-width="1.5"/><path d="M394.6 16.6l3 2.6l-3.4 1.8zM392.4 30.4l-3-2.6l3.4-1.8z" fill="#363636"/><path d="M408.8 15v17" stroke="#d4d4d4" stroke-width="1" stroke-dasharray="1 1.5"/><circle cx="417.4" cy="21.2" r="0.9" fill="#9a9a9a"/><circle cx="417.4" cy="25.4" r="0.9" fill="#9a9a9a"/><path d="M420.8 16.6v13.4" stroke="#a0a0a0" stroke-width="0.9"/><path d="M423.8 16.6v13.4" stroke="#a0a0a0" stroke-width="1.8"/><rect x="435.4" y="12.8" width="24.4" height="20.2" rx="1" fill="#b5b5b5"/><rect x="440.4" y="17.6" width="8" height="11.2" fill="#6d9fae"/><path d="M443.6 19l6.6 4.2l-6.6 4.2z" fill="#2d6c80"/><rect x="450.2" y="17.2" width="1.8" height="12" fill="#2d6c80"/><rect x="452" y="17.2" width="1.4" height="12" fill="#6d9fae"/><path d="M471.6 17.4h3.4l2.4 12h-8.6z" fill="none" stroke="#363636" stroke-width="1.4" stroke-linejoin="round"/><path d="M472 27l4.6-6.6" stroke="#363636" stroke-width="1.1"/><circle cx="476.6" cy="20.6" r="1.3" fill="#363636"/><path d="M488 15v17" stroke="#d8d8d8" stroke-width="1" stroke-dasharray="1 1.5"/><text x="500.2" y="26.0" font-size="7.1" fill="#a8a8a8" text-anchor="start" font-weight="normal" textLength="44" lengthAdjust="spacingAndGlyphs">合奏調 (実音)</text><path d="M565 19.6h2l1-1.2h3.4l1 1.2h5.8q1 0 1 1v7.2q0 1-1 1h-13.2q-1 0-1-1v-7.2q0-1 1-1z" fill="#9b9b9b"/><circle cx="573.6" cy="24.2" r="3.2" fill="#e9e9e9"/><circle cx="573.6" cy="24.2" r="1.9" fill="#9b9b9b"/><rect x="566" y="20.8" width="2.2" height="1.2" fill="#e9e9e9"/><rect x="1215" y="18" width="15.4" height="10.8" rx="0.8" fill="#333"/><path d="M1215.6 18.6l7.1 5.6l7.1-5.6M1215.6 28.2l5.4-5M1229.8 28.2l-5.4-5" fill="none" stroke="#e9e9e9" stroke-width="1.1"/><text x="1234.8" y="26" font-size="7.8" fill="#3a3a3a" text-anchor="start" font-weight="normal" textLength="36.2" lengthAdjust="spacingAndGlyphs">フィードバック</text><ellipse cx="16" cy="53.2" rx="2.6" ry="1.9" transform="rotate(-20 16 53.2)" fill="#9c9c9c"/><path d="M18.2 53.2V45L24.4 54.6V44.6" fill="none" stroke="#9c9c9c" stroke-width="2.1" stroke-linejoin="round"/><path d="M33.4 47.6h4.2l-2.1 2.2z" fill="#8a8a8a"/><path transform="translate(48.25,56.42) scale(0.01092,0.01092)" d="M583 -628Q595 -591 595 -548Q595 -531 592.5 -512Q590 -493 585 -472Q609 -441 609 -374Q609 -328 596.5 -279.5Q584 -231 558 -193H542Q587 -286 587 -355Q587 -418 551.5 -466.5Q516 -515 446 -559L347 -622V-171Q347 -129 318.5 -92.5Q290 -56 245 -33.5Q200 -11 152 -11Q104 -11 77 -31Q50 -51 50 -99Q50 -131 68 -160Q86 -189 115 -212Q144 -235 178.5 -248.5Q213 -262 247 -262Q271 -262 290 -256Q309 -250 321 -236V-1330H347Q350 -1295 362 -1268.5Q374 -1242 401.5 -1212Q429 -1182 478 -1135Q527 -1089 552 -1048.5Q577 -1008 586 -970Q595 -932 595 -892Q595 -865 592 -845Q589 -825 582 -805Q588 -783 591.5 -761Q595 -739 595 -716Q595 -672 583 -628ZM351 -1148Q351 -1083 407 -1030Q454 -985 484.5 -953.5Q515 -922 535 -896Q555 -870 568 -841Q571 -859 571 -875Q571 -924 552.5 -963Q534 -1002 502 -1034Q471 -1066 432 -1093.5Q393 -1121 351 -1148ZM351 -972Q351 -935 368 -903Q379 -882 402 -859Q425 -836 450 -813Q483 -783 515 -746.5Q547 -710 568 -665Q571 -683 571 -699Q571 -731 562.5 -759.5Q554 -788 538 -813Q519 -845 492 -869.5Q465 -894 434 -916Q414 -930 393 -944.5Q372 -959 351 -972ZM349 -798Q352 -750 376 -712.5Q400 -675 436 -641L512 -570Q533 -551 547 -534Q561 -517 568 -503Q569 -511 569 -516Q569 -521 569 -527Q569 -678 349 -798Z" fill="#9c9c9c" stroke="#9c9c9c" stroke-width="55"/><path transform="translate(73.98,56.44) scale(0.01242,0.01242)" d="M321 -1154H347Q350 -1117 363.5 -1089Q377 -1061 405.5 -1031Q434 -1001 480 -956Q527 -911 552 -871Q577 -831 586 -793.5Q595 -756 595 -716Q595 -672 583 -628Q595 -591 595 -548Q595 -531 592.5 -512Q590 -493 585 -472Q609 -441 609 -374Q609 -328 596.5 -279.5Q584 -231 558 -193H542Q587 -286 587 -355Q587 -418 551.5 -466.5Q516 -515 446 -559L347 -622V-171Q347 -129 318.5 -92.5Q290 -56 245 -33.5Q200 -11 152 -11Q104 -11 77 -31Q50 -51 50 -99Q50 -131 68 -160Q86 -189 115 -212Q144 -235 178.5 -248.5Q213 -262 247 -262Q271 -262 290 -256Q309 -250 321 -236ZM351 -972Q351 -935 368 -903Q379 -882 401 -859Q423 -836 449 -813Q481 -784 513.5 -747Q546 -710 568 -665Q571 -683 571 -699Q571 -762 538 -813Q504 -865 453 -902.5Q402 -940 351 -972ZM349 -798Q352 -750 376 -712.5Q400 -675 436 -641L512 -570Q533 -551 547 -534Q561 -517 568 -503Q569 -511 569 -516Q569 -521 569 -527Q569 -678 349 -798Z" fill="#9c9c9c" stroke="#9c9c9c" stroke-width="55"/><path transform="translate(98.92,56.45) scale(0.01363,0.01363)" d="M321 -1009H347Q350 -980 356 -958Q362 -936 372 -919Q389 -892 413 -872.5Q437 -853 468 -822Q498 -793 527 -757.5Q556 -722 575.5 -677Q595 -632 595 -576Q595 -531 581 -478Q607 -440 607 -368Q607 -320 594 -272.5Q581 -225 556 -191H540Q587 -283 587 -351Q587 -406 556 -452Q536 -482 511.5 -505.5Q487 -529 449 -554Q411 -579 347 -611V-171Q347 -128 318.5 -91.5Q290 -55 245 -33Q200 -11 152 -11Q110 -11 80 -30Q50 -49 50 -89Q50 -137 79 -176Q108 -215 154 -238.5Q200 -262 249 -262Q294 -262 321 -238ZM353 -823Q353 -771 376 -727Q384 -713 408.5 -682Q433 -651 467 -619Q505 -583 534 -550Q563 -517 568 -505Q570 -513 571 -523.5Q572 -534 572 -547Q572 -623 523 -690Q474 -757 353 -823Z" fill="#9c9c9c" stroke="#9c9c9c" stroke-width="55"/><path transform="translate(123.92,56.45) scale(0.01363,0.01363)" d="M325 -1009H351Q357 -968 366 -936.5Q375 -905 392 -875.5Q409 -846 437 -812Q467 -777 487 -753.5Q507 -730 527 -704Q564 -658 581.5 -609.5Q599 -561 599 -511Q599 -407 511 -259H495Q523 -318 545.5 -377.5Q568 -437 568 -491Q568 -545 540 -602Q512 -659 461.5 -698Q411 -737 351 -741V-175Q351 -132 323.5 -94.5Q296 -57 251 -34Q206 -11 152 -11Q109 -11 79.5 -33Q50 -55 50 -98Q50 -130 67 -159.5Q84 -189 112 -212Q140 -235 173.5 -248Q207 -261 241 -261Q299 -261 325 -238Z" fill="#9c9c9c" stroke="#9c9c9c" stroke-width="55"/><path transform="translate(148.91,56.45) scale(0.01373,0.01373)" d="M325 -1009H351Q357 -968 366 -936.5Q375 -905 392 -875.5Q409 -846 437 -812Q467 -777 487 -753.5Q507 -730 527 -704Q564 -658 581.5 -609.5Q599 -561 599 -511Q599 -407 511 -259H495Q523 -318 545.5 -377.5Q568 -437 568 -491Q568 -545 540 -602Q512 -659 461.5 -698Q411 -737 351 -741V-175Q351 -132 323.5 -94.5Q296 -57 251 -34Q206 -11 152 -11Q109 -11 79.5 -33Q50 -55 50 -98Q50 -130 67 -159.5Q84 -189 112 -212Q140 -235 173.5 -248Q207 -261 241 -261Q299 -261 325 -238Z" fill="#9c9c9c" stroke="#9c9c9c" stroke-width="55"/><path transform="translate(173.88,56.56) scale(0.01413,0.01413)" d="M350 -1009V-173Q350 -130 321.5 -93Q293 -56 248 -33.5Q203 -11 153 -11Q107 -11 79 -34.5Q51 -58 51 -98Q51 -129 69 -158Q87 -187 116.5 -210.5Q146 -234 181 -247.5Q216 -261 250 -261Q293 -261 324 -236V-1009Z" fill="#9c9c9c" stroke="#9c9c9c" stroke-width="55"/><path transform="translate(198.30,56.39) scale(0.01396,0.01396)" d="M323 -1009H347V-169Q347 -137 330.5 -106.5Q314 -76 286 -52Q258 -28 225 -13.5Q192 1 159 1Q111 1 80.5 -21.5Q50 -44 50 -90Q50 -141 78.5 -181.5Q107 -222 153 -245.5Q199 -269 251 -269Q295 -269 323 -247ZM77 -66Q77 -56 84.5 -48Q92 -40 105 -40Q140 -40 192 -69Q227 -89 255.5 -113.5Q284 -138 301 -162.5Q318 -187 318 -204Q318 -215 312.5 -222.5Q307 -230 293 -230Q274 -230 247 -218Q220 -206 190.5 -187Q161 -168 135 -145.5Q109 -123 93 -102Q77 -81 77 -66Z" fill="#9c9c9c" stroke="#9c9c9c" stroke-width="55"/><path transform="translate(222.95,56.94) scale(0.01706,0.01706)" d="M50 -135Q50 -172 77 -200Q104 -228 150.5 -244Q197 -260 253 -260Q310 -260 358 -244.5Q406 -229 435 -201Q464 -173 464 -135Q464 -96 436 -67.5Q408 -39 361.5 -23.5Q315 -8 259 -8Q203 -8 155.5 -23Q108 -38 79 -66.5Q50 -95 50 -135ZM280 -28Q314 -28 326.5 -53Q339 -78 339 -112Q339 -147 324.5 -176Q310 -205 286 -222.5Q262 -240 232 -240Q198 -240 186.5 -215Q175 -190 175 -156Q175 -122 189 -93Q203 -64 226.5 -46Q250 -28 280 -28Z" fill="#9c9c9c" stroke="#9c9c9c" stroke-width="55"/><path transform="translate(246.82,56.71) scale(0.01566,0.01566)" d="M564 31V-128Q562 -90 532.5 -63Q503 -36 457 -22Q411 -8 359 -8Q304 -8 256.5 -23Q209 -38 180 -66.5Q151 -95 150 -135V31H114V-301H150V-141Q152 -178 180.5 -204.5Q209 -231 254.5 -245.5Q300 -260 353 -260Q410 -260 457.5 -245Q505 -230 534 -202Q563 -174 564 -135V-301H597V31ZM628 31V-301H663V31ZM50 31V-301H85V31ZM380 -28Q414 -28 426.5 -53Q439 -78 439 -112Q439 -146 424.5 -175Q410 -204 386 -222Q362 -240 332 -240Q298 -240 286.5 -215Q275 -190 275 -156Q275 -122 289 -93Q303 -64 327 -46Q351 -28 380 -28Z" fill="#9c9c9c" stroke="#9c9c9c" stroke-width="55"/><path transform="translate(270.82,56.71) scale(0.01566,0.01566)" d="M564 31V-128Q562 -90 532.5 -63Q503 -36 457 -22Q411 -8 359 -8Q304 -8 256.5 -23Q209 -38 180 -66.5Q151 -95 150 -135V31H114V-301H150V-141Q152 -178 180.5 -204.5Q209 -231 254.5 -245.5Q300 -260 353 -260Q410 -260 457.5 -245Q505 -230 534 -202Q563 -174 564 -135V-301H597V31ZM628 31V-301H663V31ZM50 31V-301H85V31ZM380 -28Q414 -28 426.5 -53Q439 -78 439 -112Q439 -146 424.5 -175Q410 -204 386 -222Q362 -240 332 -240Q298 -240 286.5 -215Q275 -190 275 -156Q275 -122 289 -93Q303 -64 327 -46Q351 -28 380 -28Z" fill="#9c9c9c" stroke="#9c9c9c" stroke-width="55"/><path d="M282.4 41.6v15" stroke="#9c9c9c" stroke-width="1"/><circle cx="302.6" cy="54.6" r="0.75" fill="#9c9c9c"/><circle cx="326.2" cy="54.6" r="0.75" fill="#9c9c9c"/><circle cx="329.4" cy="54.6" r="0.75" fill="#9c9c9c"/><circle cx="350.8" cy="54.6" r="0.75" fill="#9c9c9c"/><circle cx="354.0" cy="54.6" r="0.75" fill="#9c9c9c"/><circle cx="357.2" cy="54.6" r="0.75" fill="#9c9c9c"/><circle cx="373.2" cy="54.6" r="0.75" fill="#9c9c9c"/><circle cx="376.4" cy="54.6" r="0.75" fill="#9c9c9c"/><circle cx="379.6" cy="54.6" r="0.75" fill="#9c9c9c"/><circle cx="382.8" cy="54.6" r="0.75" fill="#9c9c9c"/><path d="M397 55.6v-8.6M405.6 55.6v-8.6" stroke="#9c9c9c" stroke-width="1"/><ellipse cx="398.6" cy="46.6" rx="2.3" ry="1.6" transform="rotate(-20 398.6 46.6)" fill="#9c9c9c"/><ellipse cx="407.2" cy="46.6" rx="2.3" ry="1.6" transform="rotate(-20 407.2 46.6)" fill="#9c9c9c"/><path d="M398.2 43.6q4.4-3 8.8 0" fill="none" stroke="#9c9c9c" stroke-width="0.9"/><path d="M417.6 40v19M447.2 40v19" stroke="#d6d6d6" stroke-width="1" stroke-dasharray="1 1.5"/><path transform="translate(425.48,56.53) scale(0.01404,0.01404)" d="M147 -878 307 -683Q257 -624 230 -581Q203 -538 203 -494Q203 -457 227 -416.5Q251 -376 303 -314L287 -292Q243 -320 205 -320Q177 -320 163 -301.5Q149 -283 149 -257Q149 -225 162.5 -196.5Q176 -168 199 -142L186 -123Q117 -173 84 -214Q51 -255 51 -303Q51 -346 78 -366Q105 -386 143 -386Q173 -386 221 -363V-365L67 -570Q168 -659 168 -736Q168 -797 104 -878Z" fill="#9c9c9c" stroke="#9c9c9c" stroke-width="55"/><path transform="translate(431.71,59.38) scale(0.01779,0.01779)" d="M155 -269 251 -609Q230 -590 203.5 -582Q177 -574 151 -574Q108 -574 79 -597Q50 -620 50 -663Q50 -691 70 -710.5Q90 -730 121 -730Q150 -730 168.5 -711.5Q187 -693 187 -662Q187 -640 177 -623Q177 -617 189 -617Q244 -617 294 -703H312L191 -269Z" fill="#9c9c9c" stroke="#9c9c9c" stroke-width="55"/><path d="M433.8 44.2h5.6" stroke="#9c9c9c" stroke-width="1.1"/><path transform="translate(457.79,51.60) scale(0.02015,0.01832)" d="M224 0V-45Q224 -64 211.5 -75Q199 -86 181 -86Q162 -86 149 -75Q136 -64 136 -47V0H50V-86H105Q119 -86 127.5 -100Q136 -114 136 -131Q136 -147 126.5 -161.5Q117 -176 111 -176H50V-262H136V-209Q136 -195 149 -185.5Q162 -176 181 -176Q196 -176 210 -185Q224 -194 224 -207V-262H310V-176H259Q246 -176 235 -160.5Q224 -145 224 -131Q224 -114 233.5 -100Q243 -86 259 -86H310V0Z" fill="#9c9c9c" stroke="#9c9c9c" stroke-width="20"/><path transform="translate(482.22,51.01) scale(0.02361,0.01574)" d="M97 -46V-189L50 -177V-277L97 -290V-486H128V-298L195 -314V-509H226V-322L275 -333V-234L226 -220V-77L275 -89V14L226 26V214H195V34L128 52V247H97V59L50 71V-32ZM195 -70V-214L128 -197V-54Z" fill="#9c9c9c" stroke="#9c9c9c" stroke-width="30"/><path transform="translate(508.32,51.24) scale(0.02151,0.01655)" d="M226 -316V221H195V9L50 46V-486H83V-279ZM197 -84V-212L81 -183V-56Z" fill="#9c9c9c" stroke="#9c9c9c" stroke-width="35"/><path transform="translate(533.82,54.01) scale(0.01952,0.01627)" d="M50 -615H81V-225Q118 -262 165 -262Q197 -262 223 -240.5Q249 -219 249 -178Q249 -146 230 -119Q211 -92 179 -65L110 -6Q91 10 76 25.5Q61 41 50 55ZM81 -12Q107 -40 125 -63.5Q143 -87 153 -105Q164 -124 169.5 -140Q175 -156 175 -170Q175 -198 162 -210.5Q149 -223 134 -223Q118 -223 102.5 -211.5Q87 -200 81 -180Z" fill="#9c9c9c" stroke="#9c9c9c" stroke-width="40"/><path transform="translate(556.86,54.01) scale(0.01871,0.01627)" d="M218 -107Q210 -95 192.5 -78Q175 -61 147 -39Q92 4 50 55V-615H79V-225Q125 -262 163 -262Q195 -262 218 -242V-615H249V-225Q286 -262 333 -262Q365 -262 391 -240.5Q417 -219 417 -178Q417 -146 398 -119Q379 -92 347 -65L278 -6Q239 28 218 55ZM249 -12Q289 -54 316 -95.5Q343 -137 343 -170Q343 -198 330 -210.5Q317 -223 302 -223Q286 -223 270.5 -211.5Q255 -200 249 -180ZM79 -12 120 -59Q149 -92 161 -117Q173 -142 173 -170Q173 -221 132 -221Q116 -221 100.5 -209.5Q85 -198 79 -180Z" fill="#9c9c9c" stroke="#9c9c9c" stroke-width="40"/><path d="M583.4 56.2v-9.4M587.8 41.8v9" stroke="#9c9c9c" stroke-width="1"/><ellipse cx="585" cy="46.8" rx="1.9" ry="1.3" transform="rotate(-20 585 46.8)" fill="#9c9c9c"/><path d="M589.6 46.4q3.6 1.4 2 5.4l1.4-0.4l-2 2.6l-1.4-2.8l1.2 0.3q1.2-2.8-1.6-3.9z" fill="#9c9c9c"/><rect x="604" y="42.8" width="13.2" height="11.8" rx="1.2" fill="#3f8ea8" stroke="#9fcbd9" stroke-width="0.8"/><text x="610.6" y="51.4" font-size="7.2" fill="#fff" text-anchor="middle" font-weight="normal">1</text><text x="624.4" y="51.6" font-size="7" fill="#7a7a7a" text-anchor="middle" font-weight="normal">2</text><text x="638.4" y="51.6" font-size="7" fill="#7a7a7a" text-anchor="middle" font-weight="normal">3</text><text x="652.8" y="51.6" font-size="7" fill="#7a7a7a" text-anchor="middle" font-weight="normal">4</text><path d="M666 40v19" stroke="#dcdcdc" stroke-width="1" stroke-dasharray="1 1.5"/><rect x="1186.6" y="42.2" width="76.4" height="13.4" rx="1.6" fill="url(#btn)" stroke="#c0c0c0" stroke-width="0.7"/><text x="1189.6" y="51.8" font-size="7.6" fill="#444" text-anchor="start" font-weight="normal" textLength="58.4" lengthAdjust="spacingAndGlyphs">アドバンス 編集済み</text><path d="M1254.6 47.8h4l-2 2.2z" fill="#555"/><path d="M1269.2 49h3M1270.7 47.5v3" stroke="#b0b0b0" stroke-width="0.7"/><rect x="1.5" y="64.8" width="122.8" height="17" fill="#d1d1d1"/><path d="M1.5 81.8V64.8H124.3" fill="none" stroke="#bdbdbd" stroke-width="0.7"/><rect x="124.6" y="63.4" width="85.8" height="19" fill="#ededed"/><path d="M124.6 82V63.4H210.4V82" fill="none" stroke="#c6c6c6" stroke-width="0.8"/><text x="8.6" y="76.6" font-size="7.4" fill="#333" text-anchor="start" font-weight="normal" textLength="92.6" lengthAdjust="spacingAndGlyphs">魔法ぽいぽいぽいっと！_Stage1</text><text x="131.2" y="76.2" font-size="7.4" fill="#222" text-anchor="start" font-weight="normal" textLength="57" lengthAdjust="spacingAndGlyphs">天地創造_Origins*</text><path d="M107.8 71.4l4 4M111.8 71.4l-4 4M194.2 70.6l4.2 4.2M198.4 70.6l-4.2 4.2" stroke="#222" stroke-width="1.2"/>
</svg>
</body></html>
